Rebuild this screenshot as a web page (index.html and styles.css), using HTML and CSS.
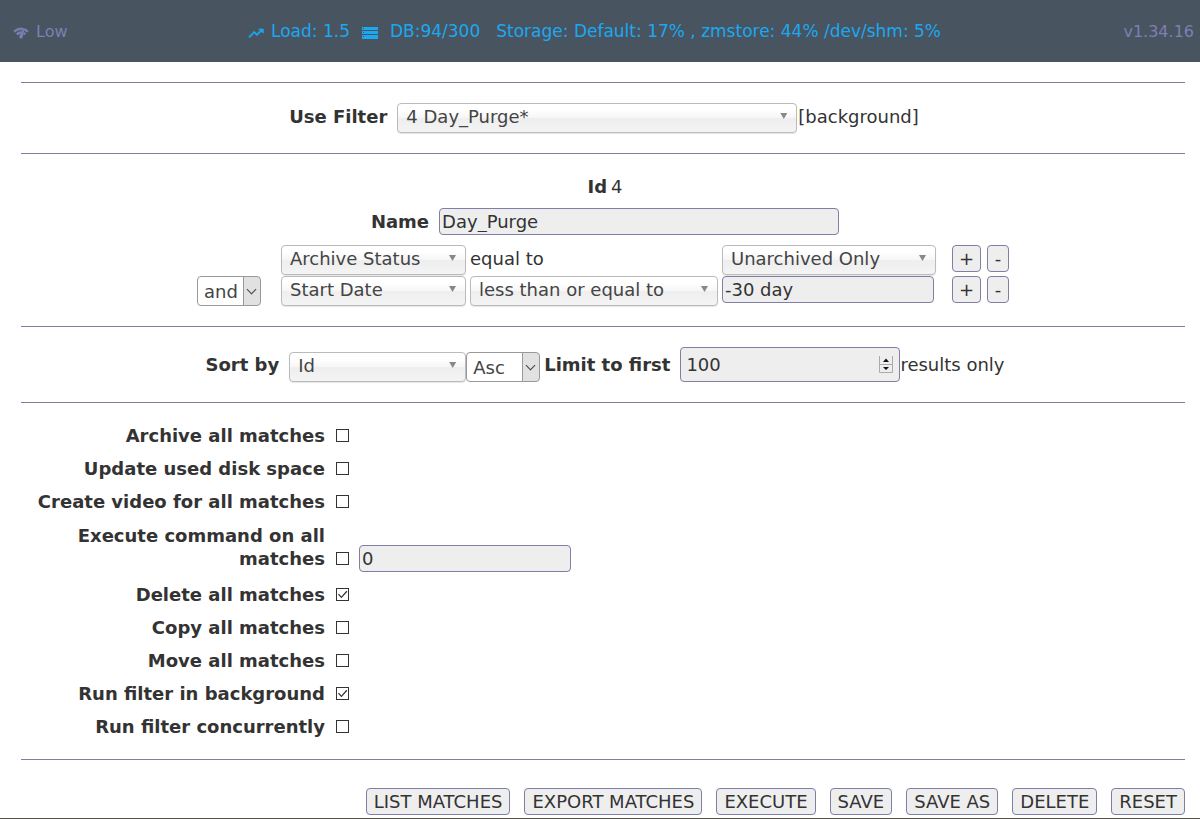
FILE: index.html
```html
<!DOCTYPE html>
<html lang="en">
<head>
<meta charset="utf-8">
<title>Event Filter</title>
<link rel="stylesheet" href="styles.css">
</head>
<body>
<header class="topbar">
  <a class="bandwidth" href="#">
    <svg class="icon" viewBox="0 0 24 24" aria-hidden="true"><path stroke="currentColor" d="M15.9 5c-.17 0-.32.09-.41.23l-.07.15-5.18 11.65c-.16.29-.26.61-.26.96 0 1.11.9 2.01 2.01 2.01.96 0 1.77-.68 1.96-1.59l.01-.03L16.4 5.5c0-.28-.22-.5-.5-.5zM1 9l2 2c2.88-2.88 6.79-4.08 10.53-3.62l1.19-2.68C9.89 3.84 4.74 5.27 1 9zm20 2l2-2c-1.64-1.64-3.55-2.82-5.59-3.57l-.53 2.82c1.5.62 2.9 1.53 4.12 2.75zm-4 4l2-2c-.8-.8-1.7-1.42-2.66-1.89l-.55 2.92c.42.27.83.59 1.21.97zM5 13l2 2c1.13-1.13 2.56-1.79 4.03-2l1.28-2.88C9.69 9.97 6.99 10.92 5 13z"/></svg>
    <span>Low</span>
  </a>
  <div class="stats">
    <span class="stat">
      <svg class="icon" viewBox="0 0 24 24" aria-hidden="true"><path stroke="currentColor" d="M16 6l2.3 2.3-4.9 4.9-4-4L1 17.6l1.5 1.500 6.900-7 4 4 6.300-6.300L23 12V6z"/></svg>
      <span>Load: 1.5</span>
    </span>
    <span class="stat stat-db">
      <svg class="icon" viewBox="0 0 16 16" aria-hidden="true"><path fill-rule="evenodd" d="M0 2h16v3H0zM1 3v1h1V3zM0 6h16v3H0zM1 7v1h1V7zM0 10h16v4H0zM1 11v1h1v-1z"/></svg>
      <span>DB:94/300</span>
    </span>
    <span>Storage: Default: 17% , zmstore: 44% /dev/shm: 5%</span>
  </div>
  <a class="version" href="#">v1.34.16</a>
</header>
<main class="content">
  <form class="filter-form">
    <section class="section line use-filter">
      <label class="label" for="filter">Use Filter</label>
      <span class="chosen w-filter"><select id="filter"><option>4 Day_Purge*</option></select></span>
      <span class="after">[background]</span>
    </section>
    <section class="section details">
      <p class="line id-line"><b>Id</b><span>4</span></p>
      <div class="line name-line">
        <label class="label" for="name">Name</label>
        <input class="field w-filter" id="name" type="text" value="Day_Purge">
      </div>
      <div class="terms">
        <span></span>
        <span class="chosen"><select aria-label="Attribute 1"><option>Archive Status</option></select></span>
        <span class="operator">equal to</span>
        <span class="chosen"><select aria-label="Value 1"><option>Unarchived Only</option></select></span>
        <span class="term-buttons"><button class="btn" type="button">+</button><button class="btn" type="button">-</button></span>
        <span class="native w-and"><select aria-label="Conjunction"><option>and</option></select></span>
        <span class="chosen"><select aria-label="Attribute 2"><option>Start Date</option></select></span>
        <span class="chosen"><select aria-label="Operator 2"><option>less than or equal to</option></select></span>
        <input class="field w-value" type="text" aria-label="Value 2" value="-30 day">
        <span class="term-buttons"><button class="btn" type="button">+</button><button class="btn" type="button">-</button></span>
      </div>
    </section>
    <section class="section line sort">
      <label class="label" for="sort">Sort by</label>
      <span class="chosen w-sort"><select id="sort"><option>Id</option></select></span>
      <span class="native w-asc"><select aria-label="Sort direction"><option>Asc</option></select></span>
      <label class="label limit-label" for="limit">Limit to first</label>
      <span class="number">
        <input class="field" id="limit" type="number" value="100">
        <svg class="spinner" viewBox="0 0 14 17" aria-hidden="true"><path d="M.5 0v16.500h13V0M0 8.500h14" fill="none" stroke="#aaa"/><path d="M7 2.500L10 6H4zM7 14L4 11h6z" fill="#111"/></svg>
      </span>
      <span>results only</span>
    </section>
    <section class="section actions">
      <div class="action"><label for="a1">Archive all matches</label><input id="a1" type="checkbox"></div>
      <div class="action"><label for="a2">Update used disk space</label><input id="a2" type="checkbox"></div>
      <div class="action"><label for="a3">Create video for all matches</label><input id="a3" type="checkbox"></div>
      <div class="action action-command"><label for="a4">Execute command on all matches</label><input id="a4" type="checkbox"><input class="field w-value" type="text" aria-label="Command" value="0"></div>
      <div class="action"><label for="a5">Delete all matches</label><input id="a5" type="checkbox" checked></div>
      <div class="action"><label for="a6">Copy all matches</label><input id="a6" type="checkbox"></div>
      <div class="action"><label for="a7">Move all matches</label><input id="a7" type="checkbox"></div>
      <div class="action"><label for="a8">Run filter in background</label><input id="a8" type="checkbox" checked></div>
      <div class="action"><label for="a9">Run filter concurrently</label><input id="a9" type="checkbox"></div>
    </section>
    <div class="section buttons">
      <button class="btn" type="button">LIST MATCHES</button>
      <button class="btn" type="button">EXPORT MATCHES</button>
      <button class="btn" type="button">EXECUTE</button>
      <button class="btn" type="button">SAVE</button>
      <button class="btn" type="button">SAVE AS</button>
      <button class="btn" type="button">DELETE</button>
      <button class="btn" type="reset">RESET</button>
    </div>
  </form>
</main>
</body>
</html>
```
FILE: styles.css
```css
* { box-sizing: border-box; }

body {
  margin: 0;
  background: #fff;
  color: #333;
  font: 18px/23px "DejaVu Sans", Verdana, sans-serif;
}

input, select, button { font: inherit; color: inherit; margin: 0; }
p { margin: 0; }

.topbar {
  display: grid;
  grid-template-columns: 1fr auto 1fr;
  align-items: center;
  height: 62px;
  padding: 0 6px 0 13px;
  background: #485460;
  color: #1ca8f0;
  font-size: 16px;
}
.topbar a { color: #7f7fb2; text-decoration: none; }
.bandwidth, .stats, .stat { display: flex; align-items: center; }
.bandwidth, .stat { gap: 7px; }
.stats { gap: 12px; padding-right: 18px; font-size: 17px; }
.stat-db { gap: 12px; margin-right: 4px; }
.version { text-align: right; }
.icon { width: 16px; height: 16px; margin-top: 3px; fill: currentColor; }

.content { padding: 20px 15px 0 21px; border-bottom: 1px solid #554f45; }
.section { border-top: 1px solid #808099; }
.line { display: flex; justify-content: center; align-items: center; padding-left: 4px; }
.label, .action label { font-weight: bold; }
.label { margin-right: 10px; }

.use-filter { align-items: baseline; padding: 20px 0 20px 2px; }
.after { margin-left: 1px; }

.chosen, .native, .number { display: block; position: relative; }
.chosen select, .native select {
  display: block;
  appearance: none;
  width: 100%;
  height: 30px;
  border: 1px solid #bbb;
  border-radius: 4px;
  color: #444;
}
.chosen select {
  padding: 0 28px 3px 8px;
  background: linear-gradient(#fff 20%, #f6f6f6 50%, #eee 52%, #f4f4f4);
  box-shadow: 0 1px 1px #0000001a;
}
.chosen::after {
  content: "";
  position: absolute;
  top: 10px;
  right: 10px;
  width: 7px;
  height: 6px;
  background: #888;
  clip-path: polygon(0 0, 100% 0, 50% 100%);
}
.native select {
  padding: 0 20px 0 6px;
  border-color: #999;
  background: linear-gradient(#999, #999) right 16px top / 1px 100% no-repeat, linear-gradient(#e1e1e1, #e1e1e1) right / 16px 100% no-repeat, #fff;
}
.native::after {
  content: "";
  position: absolute;
  top: 10px;
  right: 6px;
  width: 6px;
  height: 6px;
  border: solid #444;
  border-width: 0 1px 1px 0;
  transform: rotate(45deg);
}

.field {
  display: block;
  height: 27px;
  padding: 0 2px;
  border: 1px solid #7f7fa5;
  border-radius: 4px;
  background: #eee;
}
.w-filter { width: 400px; }
.w-value { width: 212px; }
.w-and { width: 64px; }
.w-sort { width: 177px; }
.w-asc { width: 74px; }

.details { padding: 21px 0 20px; }
.id-line { gap: 4px; }
.name-line { padding-top: 10px; padding-bottom: 10px; }
.terms {
  display: grid;
  grid-template-columns: 80px 185px 248px 214px auto;
  column-gap: 4px;
  row-gap: 1px;
  justify-content: center;
}
.operator { line-height: 27px; }

.btn {
  height: 27px;
  padding: 0 7px;
  border: 1px solid #7f7fa5;
  border-radius: 4px;
  background: #eee;
  line-height: 23px;
}
.term-buttons {
  display: grid;
  grid-template-columns: 29px 22px;
  gap: 6px;
  align-items: start;
  margin-left: 12px;
}
.term-buttons .btn { padding: 0; }

.sort { padding-top: 20px; padding-bottom: 20px; }
.sort .chosen, .sort .native { align-self: flex-end; }
.limit-label { margin-left: 4px; }
.number .field {
  width: 220px;
  height: 35px;
  padding: 0 5px;
  appearance: textfield;
}
.number .field::-webkit-inner-spin-button { appearance: none; }
.spinner { position: absolute; top: 9px; right: 7px; width: 14px; height: 17px; }

.actions { display: flex; flex-direction: column; gap: 10px; padding: 21px 0; }
.action { display: flex; align-items: flex-end; }
.action-command { padding: 1px 0 3px; }
.action label { width: 304px; padding-left: 16px; margin-right: 11px; text-align: right; }
.action .field { margin: 0 0 -2px 10px; }
.action [type="checkbox"] {
  appearance: none;
  width: 13px;
  height: 13px;
  margin-bottom: 5px;
  border: 1px solid #333;
  background: #fff;
}
.action [type="checkbox"]:checked::before {
  content: "";
  display: block;
  height: 11px;
  background: #333;
  clip-path: polygon(9% 50%, 18% 44%, 40% 68%, 85% 16%, 94% 24%, 40% 84%);
}

.buttons { display: flex; justify-content: flex-end; gap: 14px; padding: 28px 0 3px; }
```
